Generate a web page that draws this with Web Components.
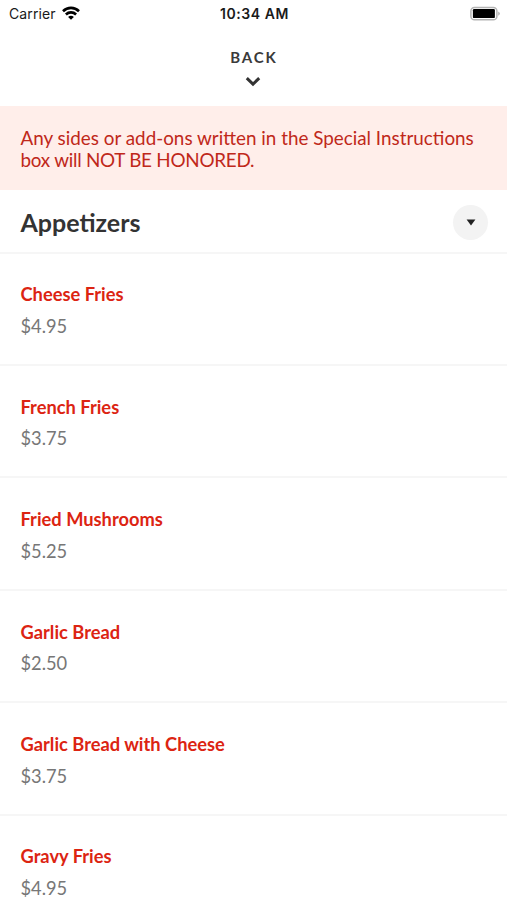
<!DOCTYPE html>
<html lang="en">
<head>
<meta charset="utf-8">
<title>Menu</title>
<style>
    body {
        margin: 0;
        height: 900px;
        overflow: hidden;
        background-color: white;
        font-family: Lato, "Liberation Sans", sans-serif;
    }
</style>
</head>
<body>
<menu-screen></menu-screen>

<script>
const items = [
    {name: "Cheese Fries", price: "$4.95"},
    {name: "French Fries", price: "$3.75"},
    {name: "Fried Mushrooms", price: "$5.25"},
    {name: "Garlic Bread", price: "$2.50"},
    {name: "Garlic Bread with Cheese", price: "$3.75"},
    {name: "Gravy Fries", price: "$4.95"}
];

class StatusBar extends HTMLElement {

    constructor() {
        super();
        this.shadowDOM = this.attachShadow({mode: "open"});
        this.render();
    }

    render() {
        this.shadowDOM.innerHTML = `
            <style>
            :host {
                display: grid;
                grid-template-columns: 1fr auto 1fr;
                align-items: center;
                height: 26px;
                padding: 0 7px 0 9px;
                box-sizing: border-box;
                font-family: Inter, "Liberation Sans", sans-serif;
                font-size: 14px;
                color: #1a1a1a;
            }

            .carrier {
                display: flex;
                align-items: center;
                gap: 6px;
                letter-spacing: .1px;
            }

            .time {
                font-size: 14px;
                font-weight: 600;
                letter-spacing: .55px;
                line-height: 18px;
                padding-top: 1px;
            }

            .carrier span {
                padding-top: 1px;
            }

            svg {
                display: block;
            }

            .battery {
                justify-self: end;
            }
            </style>

            <div class="carrier">
                <span>Carrier</span>
                <svg width="18" height="14" viewBox="0 0 18 14" fill="none" stroke="#000" stroke-width="2.6">
                    <path d="M1 5.2C5.6 .7 12.4 .7 17 5.2"/>
                    <path d="M3.9 8.5C6.8 5.7 11.2 5.7 14.1 8.5"/>
                    <path d="M6.1 10.9C7.8 9.3 10.2 9.3 11.9 10.9L9 13.8Z" fill="#000" stroke="none"/>
                </svg>
            </div>
            <span class="time">10:34 AM</span>
            <svg class="battery" width="30" height="15" viewBox="0 0 30 15">
                <rect x=".9" y="1.4" width="26" height="12.4" rx="3.6" fill="#fff" stroke="#b4b4b4" stroke-width="1.5"/>
                <rect x="2.9" y="3.1" width="22" height="9" rx="1.2" fill="#000"/>
                <path d="M28.2 5.4q1.7 .8 1.7 2.2t-1.7 2.2z" fill="#b4b4b4"/>
            </svg>`;
    }
}

class BackHeader extends HTMLElement {

    constructor() {
        super();
        this.shadowDOM = this.attachShadow({mode: "open"});
        this.render();
    }

    render() {
        this.shadowDOM.innerHTML = `
            <style>
            :host {
                display: flex;
                flex-direction: column;
                align-items: center;
                height: 80px;
                padding: 21px 1px 0 0;
                box-sizing: border-box;
                color: #3a3a3a;
            }

            .label {
                font-size: 15px;
                font-weight: 700;
                line-height: 20px;
                letter-spacing: 1.9px;
                margin-right: -1.9px;
            }

            svg {
                display: block;
                margin-top: 9px;
            }
            </style>

            <span class="label"><slot></slot></span>
            <svg width="16" height="11" viewBox="0 0 16 11" fill="none" stroke="#333" stroke-width="3">
                <path d="M1.8 2.2L8 8.1L14.2 2.2"/>
            </svg>`;
    }
}

class NoticeBanner extends HTMLElement {

    constructor() {
        super();
        this.shadowDOM = this.attachShadow({mode: "open"});
        this.render();
    }

    render() {
        this.shadowDOM.innerHTML = `
            <style>
            :host {
                display: block;
                height: 84px;
                padding: 21px 20px 0 20.5px;
                box-sizing: border-box;
                background-color: #ffeeea;
                color: #c0281a;
                font-size: 18.85px;
                line-height: 22px;
            }

            ::slotted(span) {
                display: block;
            }

            ::slotted(.tight) {
                letter-spacing: -.25px;
            }
            </style>

            <slot></slot>`;
    }
}

class MenuSection extends HTMLElement {

    constructor() {
        super();
        this.shadowDOM = this.attachShadow({mode: "open"});
        this.render();
    }

    render() {
        this.shadowDOM.innerHTML = `
            <style>
            :host {
                display: block;
            }

            header {
                display: flex;
                align-items: center;
                justify-content: space-between;
                height: 63.6px;
                padding: 3px 19px 0 20.5px;
                box-sizing: border-box;
                border-bottom: 2px solid #f6f6f6;
            }

            h2 {
                margin: 0;
                font-size: 25px;
                line-height: 30px;
                font-weight: 700;
                color: #333;
            }

            .toggle {
                display: flex;
                align-items: center;
                justify-content: center;
                width: 35px;
                height: 35px;
                border-radius: 50%;
                background-color: #f3f3f3;
            }
            </style>

            <header>
                <h2><slot name="title"></slot></h2>
                <div class="toggle">
                    <svg width="10" height="7" viewBox="0 0 10 7" fill="#222">
                        <path d="M.6 .6H9.4L5 6.6Z"/>
                    </svg>
                </div>
            </header>
            <slot></slot>`;
    }
}

class MenuItem extends HTMLElement {

    constructor() {
        super();
        this.shadowDOM = this.attachShadow({mode: "open"});
    }

    set item(item) {
        this._item = item;
        this.render();
    }

    render() {
        this.shadowDOM.innerHTML = `
            <style>
            :host {
                display: block;
                height: 112.4px;
                padding: 29.8px 20px 0 20.5px;
                box-sizing: border-box;
                border-bottom: 2px solid #f6f6f6;
            }

            p {
                margin: 0;
                font-size: 18.3px;
                line-height: 22px;
            }

            .name {
                font-weight: 700;
                color: #dc2412;
            }

            .price {
                margin-top: 9.7px;
                color: #777;
            }
            </style>

            <p class="name">${this._item.name}</p>
            <p class="price">${this._item.price}</p>`;
    }
}

class MenuScreen extends HTMLElement {

    constructor() {
        super();
        this.shadowDOM = this.attachShadow({mode: "open"});
    }

    connectedCallback() {
        this.render();
    }

    render() {
        this.shadowDOM.innerHTML = `
            <style>
            :host {
                display: block;
                height: 900px;
                overflow: hidden;
            }
            </style>

            <status-bar></status-bar>
            <back-header>BACK</back-header>
            <notice-banner>
                <span>Any sides or add-ons written in the Special Instructions</span>
                <span class="tight">box will NOT BE HONORED.</span>
            </notice-banner>
            <menu-section>
                <span slot="title">Appetizers</span>
            </menu-section>`;

        const section = this.shadowDOM.querySelector("menu-section");
        items.forEach(item => {
            const el = document.createElement("menu-item");
            el.item = item;
            section.appendChild(el);
        });
    }
}

customElements.define("status-bar", StatusBar);
customElements.define("back-header", BackHeader);
customElements.define("notice-banner", NoticeBanner);
customElements.define("menu-section", MenuSection);
customElements.define("menu-item", MenuItem);
customElements.define("menu-screen", MenuScreen);
</script>
</body>
</html>
